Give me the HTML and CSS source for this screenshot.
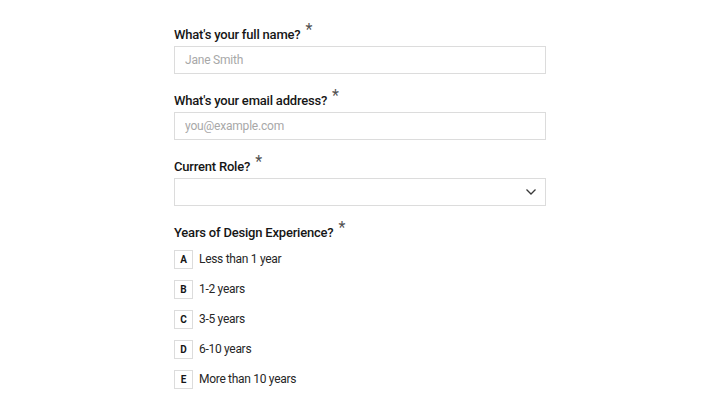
FILE: index.html
```html
<!DOCTYPE html>
<html lang="en">
<head>
<meta charset="utf-8">
<title>Design survey</title>
<link rel="stylesheet" href="styles.css">
</head>
<body>
<form class="form">
  <div class="field">
    <label class="label" for="name">What's your full name? <span class="req">*</span></label>
    <input class="input" id="name" type="text" placeholder="Jane Smith">
  </div>
  <div class="field">
    <label class="label" for="email">What's your email address? <span class="req">*</span></label>
    <input class="input" id="email" type="email" placeholder="you@example.com">
  </div>
  <div class="field">
    <label class="label" for="role">Current Role? <span class="req">*</span></label>
    <div class="select">
      <svg class="chev" width="12" height="8" viewBox="0 0 12 8"><path d="M1.5 1.5 L6 6 L10.5 1.5" fill="none" stroke="#393939" stroke-width="1.3"/></svg>
    </div>
  </div>
  <div class="field">
    <div class="label">Years of Design Experience? <span class="req">*</span></div>
    <ul class="options">
      <li class="option"><span class="key">A</span><span>Less than 1 year</span></li>
      <li class="option"><span class="key">B</span><span>1-2 years</span></li>
      <li class="option"><span class="key">C</span><span>3-5 years</span></li>
      <li class="option"><span class="key">D</span><span>6-10 years</span></li>
      <li class="option"><span class="key">E</span><span>More than 10 years</span></li>
    </ul>
  </div>
</form>
</body>
</html>
```
FILE: styles.css
```css
html, body {
  margin: 0;
  padding: 0;
  background: #ffffff;
}
body {
  font-family: Roboto, "Noto Sans", sans-serif;
  color: #161616;
}
.form {
  width: 372px;
  margin: 0 auto;
  padding-top: 24px;
  display: flex;
  flex-direction: column;
  gap: 16px;
}
.field {
  display: flex;
  flex-direction: column;
  gap: 2px;
}
.label {
  display: block;
  height: 20px;
  line-height: 20px;
  font-size: 13px;
  letter-spacing: -0.2px;
  font-weight: 500;
  color: #161616;
}
.req {
  color: #525252;
  font-size: 16px;
  font-weight: 400;
  position: relative;
  top: -4px;
  margin-left: 2px;
}
.input, .select {
  box-sizing: border-box;
  width: 372px;
  height: 28px;
  border: 1px solid #dcdcdc;
  border-radius: 0;
  background: #fff;
  margin: 0;
  padding: 0 10px;
  font-family: Roboto, "Noto Sans", sans-serif;
  font-size: 12px;
  letter-spacing: -0.2px;
  color: #161616;
  outline: none;
}
.input::placeholder {
  color: #a8a8a8;
}
.select {
  display: flex;
  align-items: center;
  justify-content: flex-end;
  padding-right: 8px;
}
.options {
  list-style: none;
  margin: 0;
  padding: 0;
}
.option {
  height: 30px;
  display: flex;
  align-items: center;
  gap: 6px;
  font-size: 12px;
  letter-spacing: -0.3px;
  color: #262626;
}
.key {
  box-sizing: border-box;
  width: 19px;
  height: 19px;
  border: 1px solid #dcdcdc;
  display: flex;
  align-items: center;
  justify-content: center;
  font-size: 10px;
  font-weight: 700;
  letter-spacing: 0;
  color: #161616;
}
```
